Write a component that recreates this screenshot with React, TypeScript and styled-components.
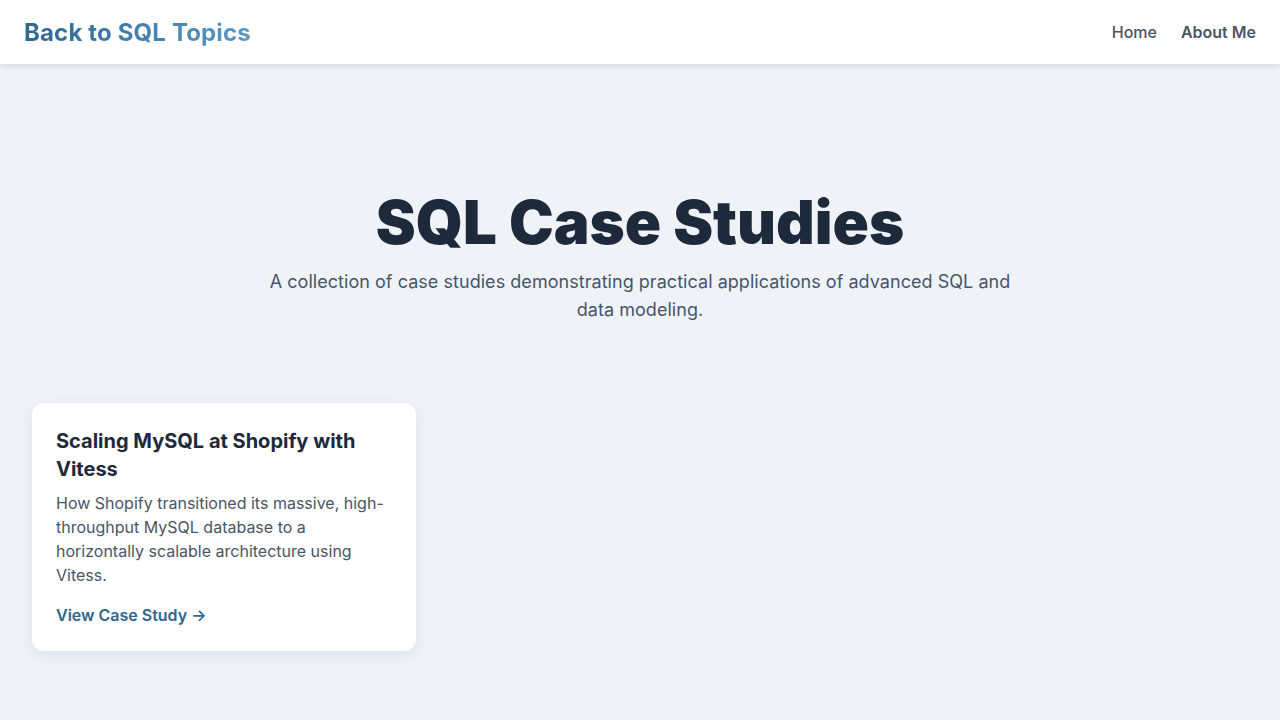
import React from "react";
import styled, { createGlobalStyle } from "styled-components";

const Global = createGlobalStyle`
  * { box-sizing: border-box; }
  html, body { margin: 0; padding: 0; }
  body {
    background: #eff3f8;
    font-family: Inter, "Noto Sans", sans-serif;
    -webkit-font-smoothing: antialiased;
  }
  a { text-decoration: none; }
`;

const Header = styled.header`
  height: 64px;
  background: #ffffff;
  box-shadow: 0 2px 6px rgba(15, 23, 42, 0.12);
  display: flex;
  align-items: center;
  justify-content: space-between;
  padding: 0 24px;
  position: relative;
  z-index: 1;
`;

const Logo = styled.a`
  font-size: 24px;
  font-weight: 700;
  letter-spacing: 0.15px;
  background: linear-gradient(90deg, #2f6690 0%, #5b98c6 100%);
  -webkit-background-clip: text;
  background-clip: text;
  color: transparent;
`;

const Nav = styled.nav`
  display: flex;
  align-items: center;
  gap: 24px;
`;

const NavLink = styled.a<{ $strong?: boolean }>`
  font-size: 16px;
  font-weight: ${(p) => (p.$strong ? 600 : 500)};
  color: #4b5563;
`;

const Main = styled.main`
  padding: 0 32px 64px;
`;

const Hero = styled.section`
  padding: 128px 0 79px;
  display: flex;
  flex-direction: column;
  align-items: center;
  text-align: center;
`;

const Title = styled.h1`
  margin: 0;
  font-size: 60px;
  line-height: 60px;
  font-weight: 900;
  color: #1e293b;
`;

const Subtitle = styled.p`
  margin: 16px 0 0;
  max-width: 768px;
  font-size: 18px;
  line-height: 28px;
  letter-spacing: 0.04px;
  color: #475569;
`;

const Grid = styled.div`
  display: grid;
  grid-template-columns: repeat(3, 1fr);
  gap: 32px;
`;

const Card = styled.article`
  background: #ffffff;
  border-radius: 12px;
  padding: 24px;
  box-shadow: 0 4px 14px rgba(15, 23, 42, 0.08);
`;

const CardTitle = styled.h2`
  margin: 0;
  font-size: 20px;
  line-height: 28px;
  font-weight: 700;
  color: #1e293b;
`;

const CardText = styled.p`
  margin: 8px 0 0;
  font-size: 16px;
  line-height: 24px;
  color: #4b5563;
`;

const CardLink = styled.a`
  display: inline-block;
  margin-top: 16px;
  font-size: 16px;
  line-height: 24px;
  font-weight: 600;
  color: #2f6690;
`;

export default function App() {
  return (
    <>
      <Global />
      <Header>
        <Logo href="#">Back to SQL Topics</Logo>
        <Nav>
          <NavLink href="#">Home</NavLink>
          <NavLink href="#" $strong>About Me</NavLink>
        </Nav>
      </Header>
      <Main>
        <Hero>
          <Title>SQL Case Studies</Title>
          <Subtitle>
            A collection of case studies demonstrating practical applications of advanced SQL and data modeling.
          </Subtitle>
        </Hero>
        <Grid>
          <Card>
            <CardTitle>Scaling MySQL at Shopify with Vitess</CardTitle>
            <CardText>
              How Shopify transitioned its massive, high-throughput MySQL database to a horizontally scalable architecture using Vitess.
            </CardText>
            <CardLink href="#">View Case Study →</CardLink>
          </Card>
        </Grid>
      </Main>
    </>
  );
}
